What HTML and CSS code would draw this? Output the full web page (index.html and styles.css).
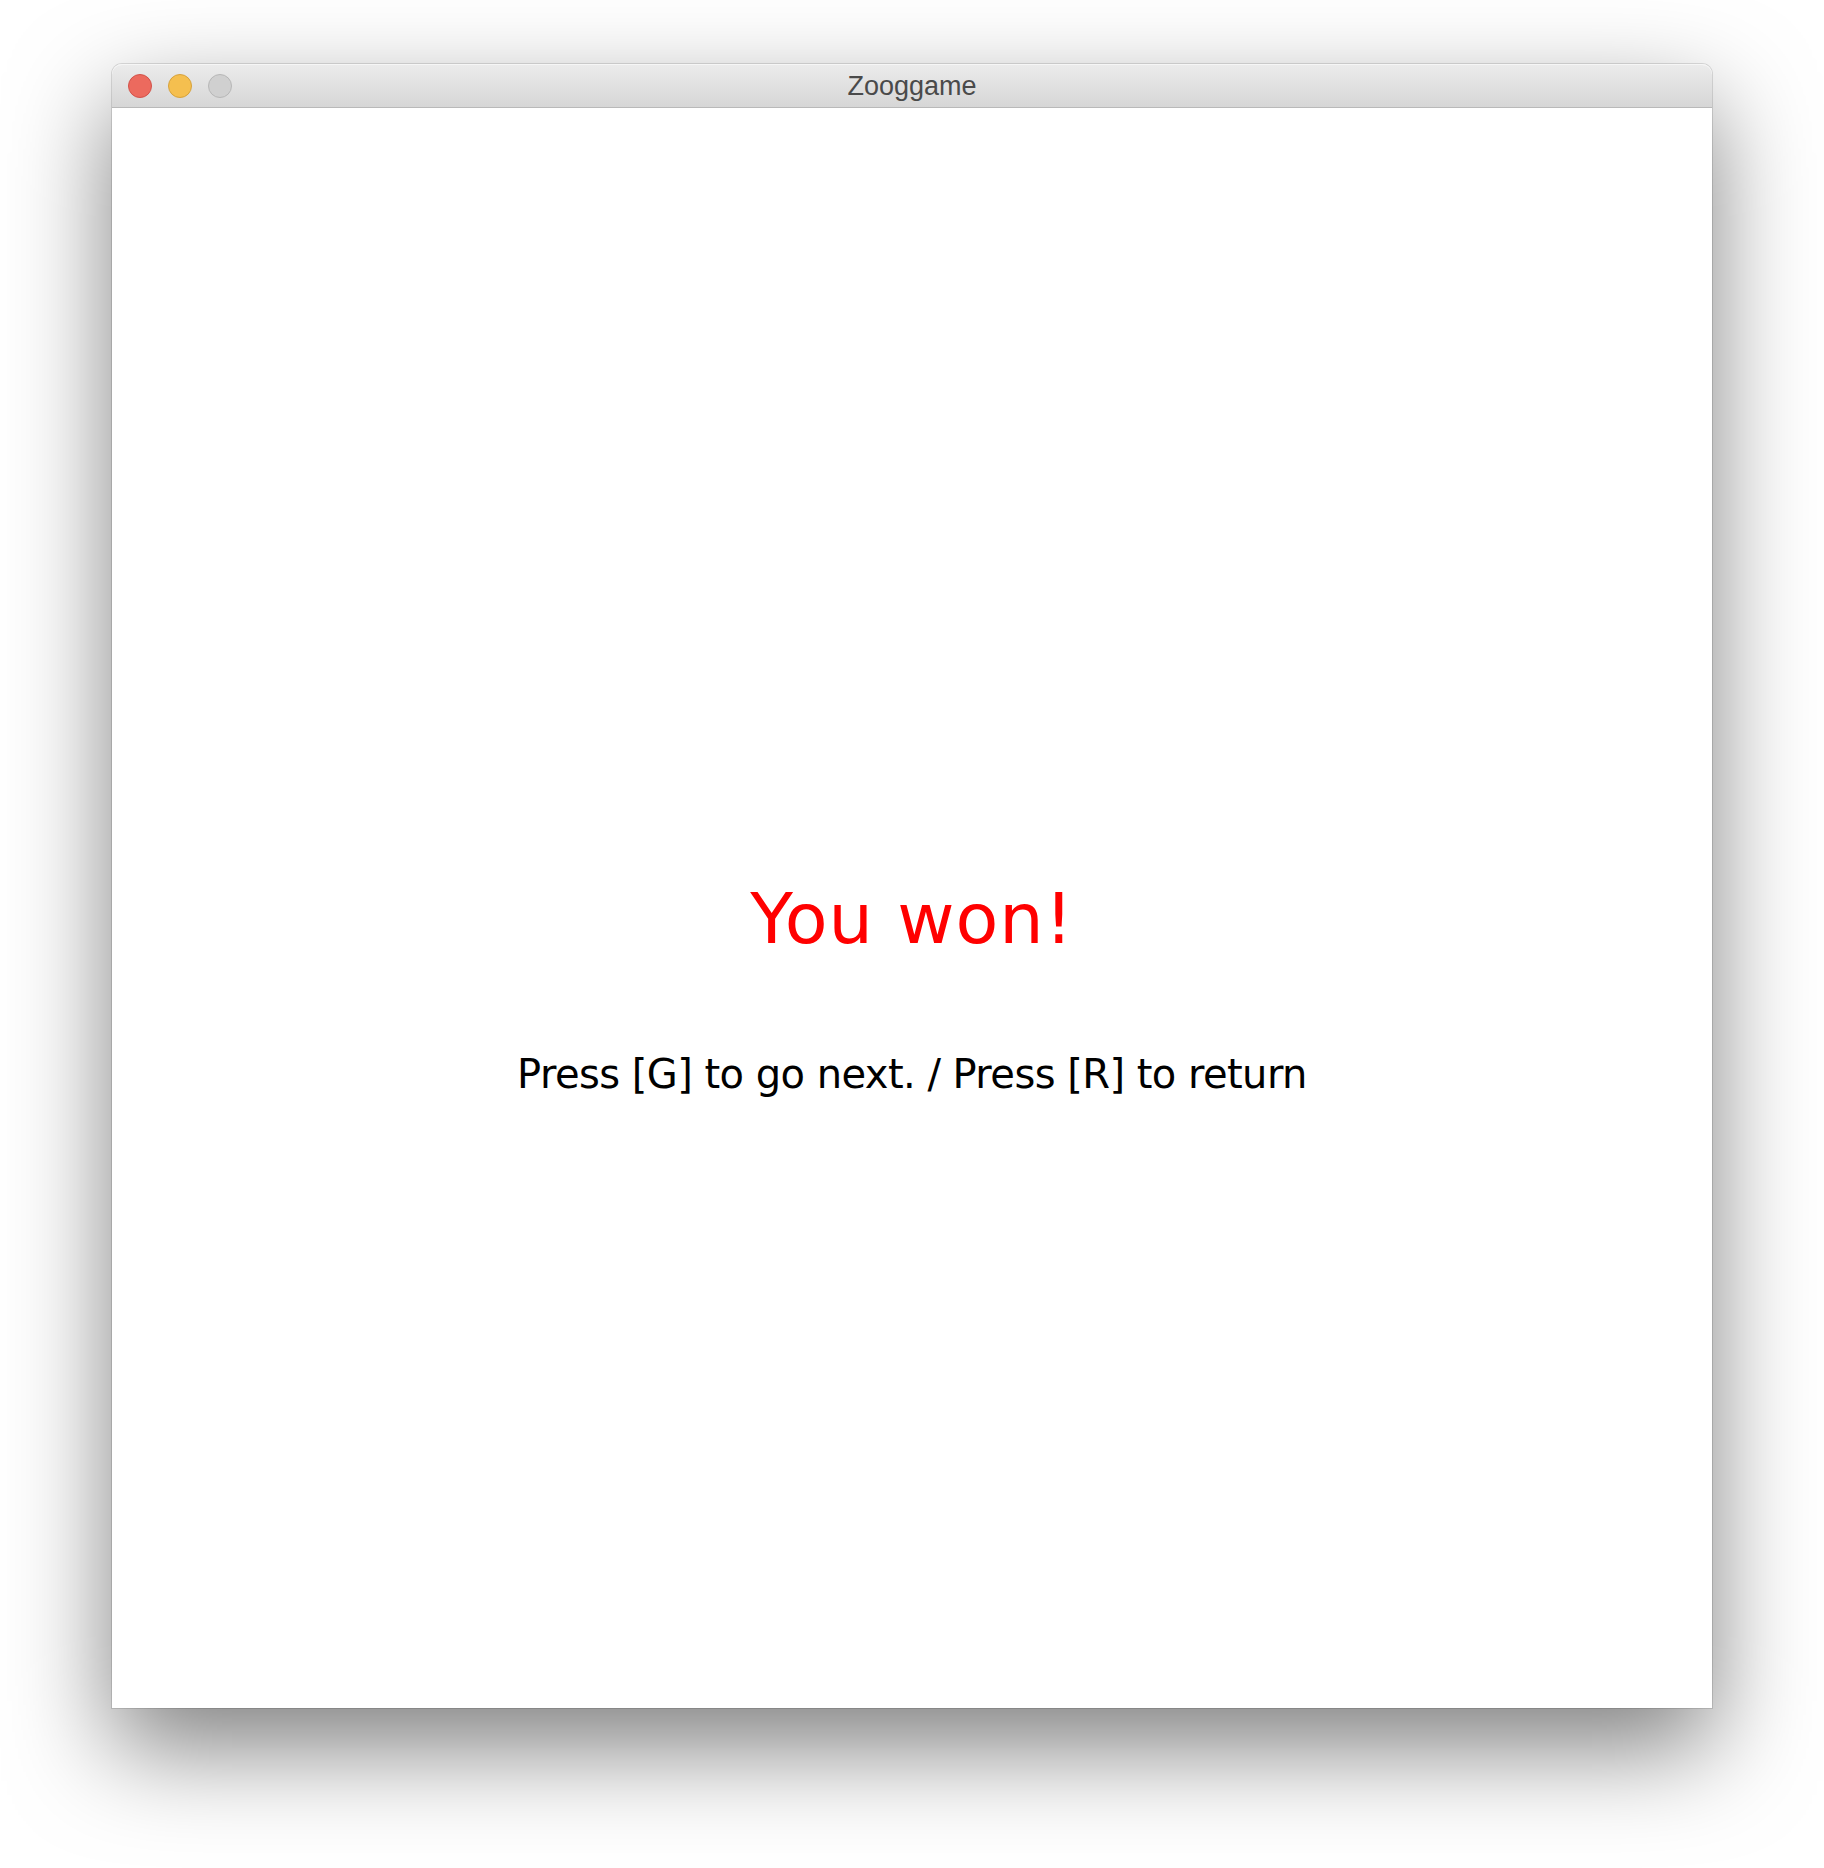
FILE: index.html
```html
<!DOCTYPE html>
<html>
<head>
<meta charset="utf-8">
<title>Zooggame</title>
<link rel="stylesheet" href="styles.css">
</head>
<body>
<div class="window">
  <div class="titlebar">
    <div class="lights">
      <span class="light close"></span>
      <span class="light min"></span>
      <span class="light max"></span>
    </div>
    <div class="title">Zooggame</div>
  </div>
  <div class="content">
    <div class="won">You won!</div>
    <div class="hint">Press [G] to go next. / Press [R] to return</div>
  </div>
</div>
</body>
</html>
```

FILE: styles.css
```css
html, body {
  margin: 0;
  padding: 0;
  background: #ffffff;
}
body {
  width: 1824px;
  height: 1868px;
  padding: 64px 0 0 112px;
  box-sizing: border-box;
  overflow: hidden;
}
.window {
  width: 1600px;
  background: #ffffff;
  border-radius: 10px 10px 0 0;
  box-shadow: 0 40px 100px rgba(0, 0, 0, 0.5), 0 0 0 1px rgba(0, 0, 0, 0.12);
}
.titlebar {
  position: relative;
  height: 43px;
  border-bottom: 1px solid #b9b9b9;
  border-radius: 10px 10px 0 0;
  background: linear-gradient(#ececec, #d6d6d6);
  box-shadow: inset 0 1px 0 #f6f6f6;
  display: flex;
  align-items: center;
  justify-content: center;
}
.lights {
  position: absolute;
  left: 16px;
  top: 10px;
  display: flex;
  gap: 16px;
}
.light {
  width: 24px;
  height: 24px;
  border-radius: 50%;
  box-sizing: border-box;
}
.close {
  background: #ec6a5e;
  border: 1px solid #d2524a;
}
.min {
  background: #f5bf4f;
  border: 1px solid #d6a23c;
}
.max {
  background: #d0d0d0;
  border: 1px solid #b7b7b7;
}
.title {
  font-family: "Liberation Sans", Arial, sans-serif;
  font-size: 27px;
  color: #4a4a4a;
  margin-top: 2px;
}
.content {
  height: 1600px;
  box-sizing: border-box;
  padding-top: 776px;
  text-align: center;
  font-family: "DejaVu Sans", sans-serif;
}
.won {
  font-size: 70px;
  line-height: 70px;
  letter-spacing: 1px;
  color: #ff0000;
}
.hint {
  margin-top: 100px;
  font-size: 40px;
  line-height: 40px;
  letter-spacing: -0.55px;
  color: #000000;
}
```
